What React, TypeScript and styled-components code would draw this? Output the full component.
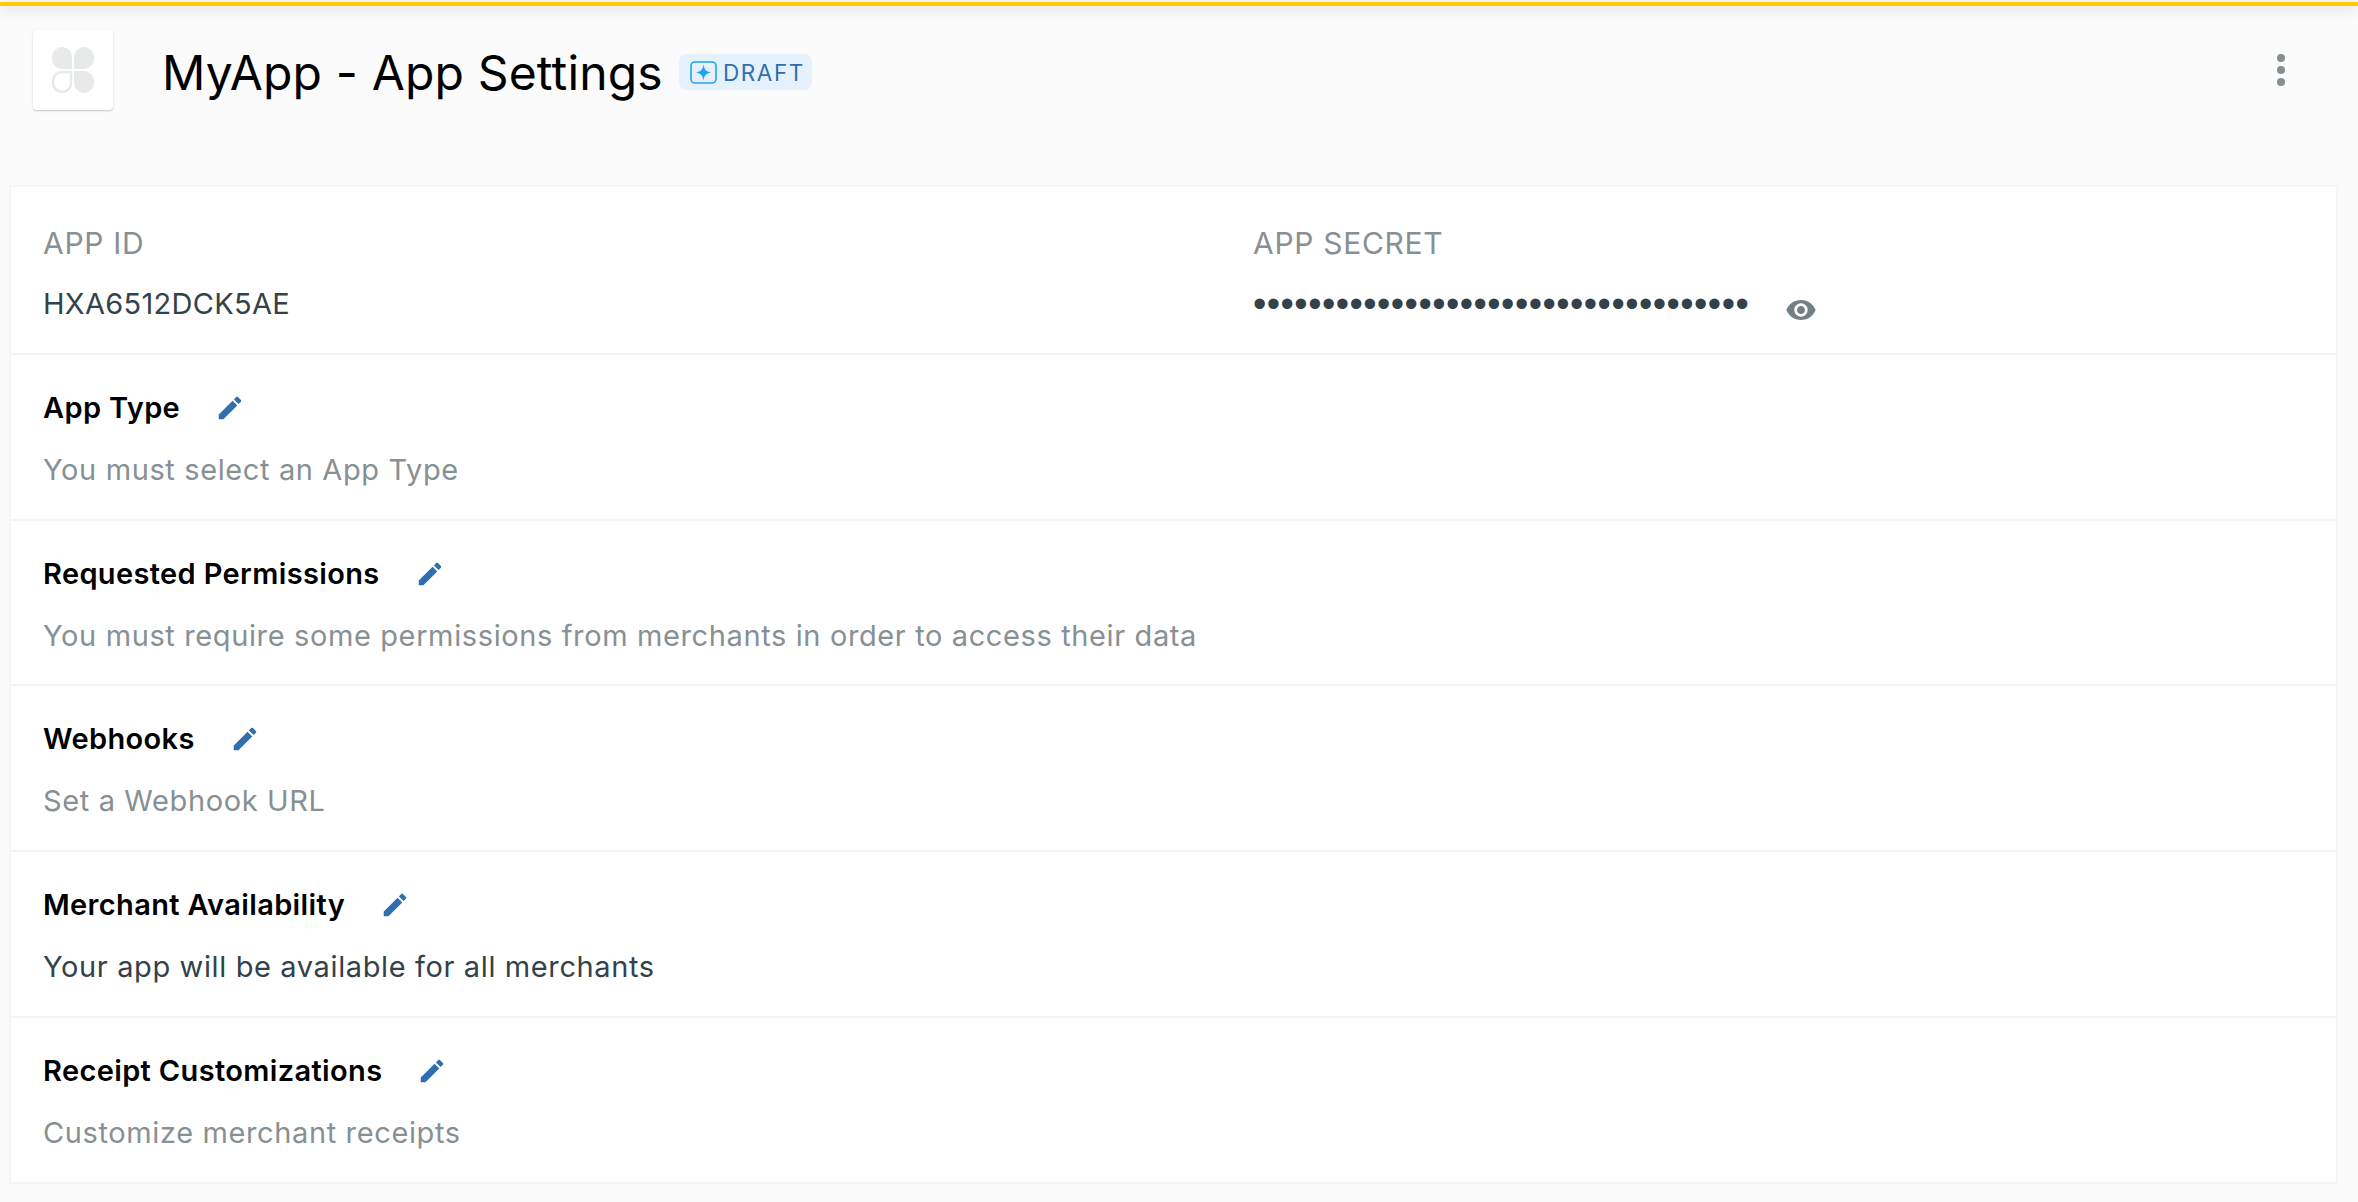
import React from "react";
import styled, { createGlobalStyle } from "styled-components";

const Global = createGlobalStyle`
  html, body { margin: 0; padding: 0; background: #fbfbfb; }
  body { font-family: Inter, "Liberation Sans", sans-serif; -webkit-font-smoothing: antialiased; }
`;

const Page = styled.div`
  width: 2358px;
  height: 1202px;
  overflow: hidden;
  display: flex;
  flex-direction: column;
  background: #fbfbfb;
`;
const TopStripe = styled.div`
  height: 4px;
  margin-top: 2px;
  background: #ffcc00;
  box-shadow: 0 3px 14px rgba(0, 0, 0, 0.2);
  flex: none;
`;
const Header = styled.header`
  height: 179px;
  flex: none;
  box-sizing: border-box;
  padding: 24px 73px 0 33px;
  display: flex;
  align-items: flex-start;
`;
const LogoBox = styled.div`
  width: 80px;
  height: 80px;
  background: #fff;
  border-radius: 4px;
  box-shadow: 0 1px 2px rgba(0, 0, 0, 0.22);
  display: flex;
  align-items: center;
  justify-content: center;
  flex: none;
`;
const Title = styled.h1`
  margin: 15px 0 0 49px;
  font-size: 48px;
  line-height: 56px;
  font-weight: 400;
  color: #000;
  letter-spacing: 0.17px;
`;
const Badge = styled.div`
  margin: 24px 0 0 16px;
  height: 36px;
  width: 133px;
  box-sizing: border-box;
  padding-left: 11px;
  display: flex;
  align-items: center;
  gap: 6px;
  border-radius: 8px;
  background: #e5f1fd;
  color: #2f6fb0;
  font-size: 22.5px;
  letter-spacing: 1.6px;
`;
const More = styled.div`
  margin: 24px 0 0 auto;
  display: flex;
  flex-direction: column;
  gap: 4px;
`;
const Dot = styled.span`
  display: block;
  width: 8px;
  height: 8px;
  border-radius: 50%;
  background: #868e91;
`;
const Card = styled.main`
  width: 2329px;
  margin-left: 9px;
  box-sizing: border-box;
  border: 2px solid #f5f5f5;
  background: #fff;
  flex: none;
`;
const Row = styled.section`
  height: 165.7px;
  box-sizing: border-box;
  border-bottom: 2px solid #f5f5f5;
  padding: 33px 0 0 32px;
  &:last-child { border-bottom: 0; height: 164px; }
`;
const IdRow = styled(Row)`
  height: 168px;
  padding-top: 36px;
  display: grid;
  grid-template-columns: 1210px 1fr;
`;
const Label = styled.div`
  font-size: 30px;
  line-height: 40px;
  letter-spacing: 0.7px;
  color: #879093;
`;
const Value = styled.div`
  margin-top: 21px;
  font-size: 29px;
  line-height: 40px;
  letter-spacing: 0.3px;
  color: #33424a;
`;
const SecretLine = styled.div`
  margin-top: 21px;
  display: flex;
  align-items: center;
  height: 40px;
`;
const Bullets = styled.span`
  font-family: "Liberation Sans", sans-serif;
  font-size: 38px;
  line-height: 40px;
  letter-spacing: 0.48px;
  color: #33424a;
  width: 532px;
  flex: none;
  white-space: nowrap;
`;
const EyeIcon = styled.svg`
  width: 32px;
  height: 32px;
  fill: #728085;
  margin-top: 11px;
`;
const RowHead = styled.div`
  display: flex;
  align-items: center;
  height: 40px;
  gap: 35px;
`;
const RowTitle = styled.h2`
  margin: 0;
  font-size: 29px;
  line-height: 40px;
  font-weight: 600;
  letter-spacing: 0.36px;
  color: #000;
`;
const Pencil = styled.svg`
  width: 30px;
  height: 30px;
  fill: #2f6fb0;
`;
const Desc = styled.p<{ $dark?: boolean }>`
  margin: 22px 0 0;
  font-size: 29px;
  line-height: 40px;
  letter-spacing: 0.62px;
  color: ${(p) => (p.$dark ? "#33424a" : "#879093")};
`;

const rows: { title: string; desc: string; dark?: boolean }[] = [
  { title: "App Type", desc: "You must select an App Type" },
  { title: "Requested Permissions", desc: "You must require some permissions from merchants in order to access their data" },
  { title: "Webhooks", desc: "Set a Webhook URL" },
  { title: "Merchant Availability", desc: "Your app will be available for all merchants", dark: true },
  { title: "Receipt Customizations", desc: "Customize merchant receipts" },
];

const Clover = () => (
  <svg width="42" height="46" viewBox="0 0 42 46">
    <path d="M20 22H10A10 10 0 0 1 0 12V10A10 10 0 0 1 20 10Z" fill="#e8eaea" />
    <path d="M22 22H32A10 10 0 0 0 42 12V10A10 10 0 0 0 22 10Z" fill="#e8eaea" />
    <path d="M19 25H10A9 9 0 0 0 1 34V36A9 9 0 0 0 19 36Z" fill="none" stroke="#e8eaea" strokeWidth="2.4" />
    <path d="M22 24H32A10 10 0 0 1 42 34V36A10 10 0 0 1 22 36Z" fill="#e8eaea" />
  </svg>
);

const DraftIcon = () => (
  <svg width="27" height="23" viewBox="0 0 27 23">
    <rect x="1" y="1" width="25" height="21" rx="4" fill="none" stroke="#1ea7e8" strokeWidth="1.6" />
    <path d="M13.5 3.5C14.3 8.5 16 10.6 21 11.5C16 12.4 14.3 14.5 13.5 19.5C12.7 14.5 11 12.4 6 11.5C11 10.6 12.7 8.5 13.5 3.5Z" fill="#1ea7e8" />
  </svg>
);

const EditGlyph = () => (
  <Pencil viewBox="0 0 24 24">
    <path d="M3 17.25V21h3.75L17.81 9.94l-3.75-3.75L3 17.25zM20.71 7.04c.39-.39.39-1.02 0-1.41l-2.34-2.34c-.39-.39-1.02-.39-1.41 0l-1.83 1.83 3.75 3.75 1.83-1.83z" />
  </Pencil>
);

export default function App() {
  return (
    <Page>
      <Global />
      <TopStripe />
      <Header>
        <LogoBox>
          <Clover />
        </LogoBox>
        <Title>MyApp - App Settings</Title>
        <Badge>
          <DraftIcon />
          DRAFT
        </Badge>
        <More>
          <Dot />
          <Dot />
          <Dot />
        </More>
      </Header>
      <Card>
        <IdRow>
          <div>
            <Label>APP ID</Label>
            <Value>HXA6512DCK5AE</Value>
          </div>
          <div>
            <Label>APP SECRET</Label>
            <SecretLine>
              <Bullets>{"•".repeat(36)}</Bullets>
              <EyeIcon viewBox="0 0 24 24">
                <path d="M12 4.5C7 4.5 2.73 7.61 1 12c1.73 4.39 6 7.5 11 7.5s9.27-3.11 11-7.5c-1.73-4.39-6-7.5-11-7.5zM12 17c-2.76 0-5-2.24-5-5s2.24-5 5-5 5 2.24 5 5-2.24 5-5 5zm0-8c-1.66 0-3 1.34-3 3s1.34 3 3 3 3-1.34 3-3-1.34-3-3-3z" />
              </EyeIcon>
            </SecretLine>
          </div>
        </IdRow>
        {rows.map((r) => (
          <Row key={r.title}>
            <RowHead>
              <RowTitle>{r.title}</RowTitle>
              <EditGlyph />
            </RowHead>
            <Desc $dark={r.dark}>{r.desc}</Desc>
          </Row>
        ))}
      </Card>
    </Page>
  );
}
